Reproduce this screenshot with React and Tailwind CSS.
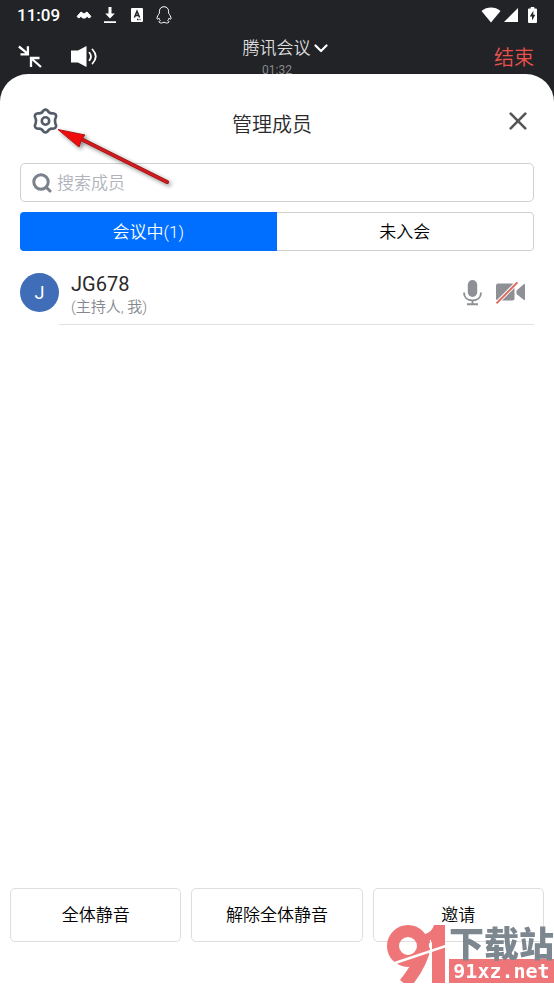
import { useState } from 'react';

const ACTIONS = ['全体静音', '解除全体静音', '邀请'];

const MEMBERS = [
  { id: 1, name: 'JG678', initial: 'J', role: '(主持人, 我)' },
];

function StatusBar() {
  return (
    <div className="flex h-[30px] items-center justify-between pl-[17px] pr-[17px]">
      <div className="flex items-center">
        <span className="w-[59px] text-[17px] font-medium leading-[30px]">11:09</span>
        <svg width="16" height="8" viewBox="0 0 16 8" fill="white" stroke="white" strokeWidth="1" strokeLinejoin="round">
          <path d="M1 5.500 5 1 8 3 11 1 15 5.500 13 7 11 5.200 9.500 7H6.500L5 5.200 3 7z" />
        </svg>
        <svg className="ml-[12px]" width="12" height="16" viewBox="0 0 12 16" fill="white">
          <path d="M4.500 0h3v6.500h3.300L6 11.500 1.200 6.500h3.300zM0 14.200h12V16H0z" />
        </svg>
        <svg className="ml-[15px]" width="12" height="14" viewBox="0 0 12 14">
          <rect width="12" height="14" rx="1" fill="white" />
          <path d="M3.400 9.500 6 3.300 8.600 9.500M4.400 7.500h3.200M6 11.500h1.500M8.500 11.500h1" fill="none" stroke="#222326" strokeWidth="1.500" />
        </svg>
        <svg className="ml-[13px]" width="16" height="18" viewBox="0 0 16 18" fill="none" stroke="white" strokeWidth="1" strokeLinejoin="round">
          <path d="M8 .7C5 .7 3.400 2.800 3.400 5.500v1.700C2.200 8.800 1 10.800 1 12.400c0 1.300 1 .9 1.900-.4.2 1 .7 1.900 1.400 2.600-1.100.5-1.500 1.100-1 1.800.7.900 3.600.7 4.700-.3 1.100 1 4 1.200 4.700.3.5-.7.100-1.300-1-1.800.7-.7 1.200-1.600 1.400-2.600.9 1.300 1.900 1.700 1.900.4 0-1.600-1.200-3.600-2.400-5.200V5.500C12.600 2.800 11 .7 8 .7z" />
        </svg>
      </div>
      <div className="flex items-center">
        <svg width="20" height="16" viewBox="0 0 20 16" fill="white">
          <path d="M.5 4C5.800-.6 14.200-.6 19.500 4L10 15.500z" />
        </svg>
        <svg className="ml-[3px]" width="14" height="14" viewBox="0 0 14 14" fill="white">
          <path d="M14 0v14H0z" />
        </svg>
        <svg className="ml-[10px]" width="9" height="16" viewBox="0 0 9 16">
          <path d="M2.700 0h3.600v1.500H8q1 0 1 1V15q0 1-1 1H1q-1 0-1-1V2.500q0-1 1-1h1.700z" fill="white" />
          <path d="M5.300 3.800 1.800 9.400H4v4L7.300 7.700H5.300z" fill="#222326" />
        </svg>
      </div>
    </div>
  );
}

function MeetingBar() {
  return (
    <div className="grid h-[44px] grid-cols-[1fr_auto_1fr]">
      <div className="flex items-start gap-[29px] pl-[18px] pt-[15px]">
        <button type="button" aria-label="最小化">
          <svg width="24" height="24" viewBox="0 0 24 24" fill="none" stroke="white" strokeWidth="2.300">
            <path d="M.9 1.500 9.600 8.700M9.900 1.300v8H2.500M23 22 13.500 13.500M13 22v-9h8.500" />
          </svg>
        </button>
        <button type="button" aria-label="扬声器">
          <svg width="26" height="24" viewBox="0 0 26 24" fill="none" stroke="white" strokeWidth="1.800" strokeLinecap="round">
            <path d="M0 5.500h7L15.500 1v21L7 17.500H0z" fill="white" stroke="none" />
            <path d="M18.500 7.800q3 3.700 0 7.400M21.500 4.500q6.500 7 0 14" />
          </svg>
        </button>
      </div>
      <div className="pl-4 pt-[6px]">
        <button type="button" className="flex items-center gap-[3px] text-[17px] font-[350] leading-6 text-[#dcdcde]">
          腾讯会议
          <svg width="14" height="9" viewBox="0 0 14 9" fill="none" stroke="white" strokeWidth="2.200" strokeLinecap="round" strokeLinejoin="round">
            <path d="M1.500 1.500 7 7l5.500-5.500" />
          </svg>
        </button>
        <div className="pr-[16px] text-center text-[12px] leading-[20px] text-[#88888b]">01:32</div>
      </div>
      <div className="flex items-start justify-end pr-5 pt-[16px]">
        <button type="button" className="text-[20px] font-[350] leading-6 text-[#ec514e]">结束</button>
      </div>
    </div>
  );
}

function SheetHeader() {
  return (
    <div className="grid grid-cols-[1fr_auto_1fr] items-start pl-[33px] pr-[27px] pt-[34px]">
      <button type="button" aria-label="设置" className="justify-self-start">
        <svg width="25" height="26" viewBox="0 0 25 26" fill="none" stroke="#545c69" strokeWidth="2.600" strokeLinejoin="round">
          <path d="M10.500 2.500Q12.500 .7 14.500 2.500Q16.500 6 20 5.300Q23 5.500 23.200 8.500Q20.800 13 23.200 17.500Q23 20.500 20 20.700Q16.500 20 14.500 23.500Q12.500 25.300 10.500 23.500Q8.500 20 5 20.700Q2 20.500 1.800 17.500Q4.200 13 1.800 8.500Q2 5.500 5 5.300Q8.500 6 10.500 2.500Z" />
          <circle cx="12.500" cy="13" r="3.700" />
        </svg>
      </button>
      <h1 className="pr-4 pt-[3px] text-[20px] font-[350] leading-7 text-[#2a2a2c]">管理成员</h1>
      <button type="button" aria-label="关闭" className="justify-self-end pt-[4px]">
        <svg width="18" height="18" viewBox="0 0 18 18" fill="none" stroke="#555558" strokeWidth="2.600" strokeLinecap="round">
          <path d="m1.700 1.700 14.600 14.600M16.300 1.700 1.700 16.300" />
        </svg>
      </button>
    </div>
  );
}

function MemberRow({ member }) {
  return (
    <li className="flex px-5">
      <div className="flex h-[39px] w-[39px] shrink-0 items-center justify-center rounded-full bg-[#3f6db8] text-[18px] text-white">
        {member.initial}
      </div>
      <div className="flex flex-1 items-start justify-between border-b border-[#e0e0e2] pb-[5px] pl-[12px] pr-[9px]">
        <div>
          <p className="text-[20px] leading-[22px] text-[#2a2a2c]">{member.name}</p>
          <p className="text-[15px] font-[350] leading-[24px] text-[#85878c]">{member.role}</p>
        </div>
        <div className="flex items-center gap-[14px] pt-[7px]">
          <button type="button" aria-label="静音">
            <svg width="19" height="26" viewBox="0 0 19 26" fill="none" stroke="#8e9096" strokeWidth="1.900">
              <rect x="4.800" y="0" width="9.400" height="17" rx="4.700" fill="#8e9096" stroke="none" />
              <path d="M1 12.500C1 17.500 4.500 20.500 9.500 20.500S18 17.500 18 12.500M9.500 20.500v3.800M4 24.300h11" />
            </svg>
          </button>
          <button type="button" aria-label="开启视频">
            <svg width="29" height="22" viewBox="0 0 29 22">
              <path d="M2 1.500h14.500q2 0 2 2v13q0 2-2 2H2q-2 0-2-2v-13q0-2 2-2z" fill="#8e9096" />
              <path d="M20.500 8.500 28 2q1-.5 1 1v14q0 1.500-1 1l-7.500-6z" fill="#8e9096" />
              <path d="M.8 21 21.200.5" stroke="white" strokeWidth="3.800" />
              <path d="M.5 21.300 21.500.3" stroke="#dc6b5e" strokeWidth="2" />
            </svg>
          </button>
        </div>
      </div>
    </li>
  );
}

function Arrow() {
  return (
    <svg className="pointer-events-none absolute left-[54px] top-[50px] drop-shadow-[2px_2px_2px_rgba(0,0,0,0.45)]" width="124" height="68" viewBox="0 0 124 68">
      <path d="M28 15.500 113 58" stroke="#9f1518" strokeWidth="4" strokeLinecap="round" />
      <path d="M28 15.500 113 58" stroke="#d81a1c" strokeWidth="2" strokeLinecap="round" />
      <path d="M4 5.500 31 11 27.500 15.500 25 23z" fill="#f00c0c" stroke="#b31315" strokeWidth="1" />
    </svg>
  );
}

function Watermark() {
  return (
    <div className="pointer-events-none absolute bottom-0 right-0 flex items-end gap-[3px] pb-px opacity-95">
      {/* ring with a tail and a slanted cut, beside an upright bar */}
      <svg width="62" height="58" viewBox="0 0 62 58">
        <g fill="none" stroke="#ee6f72">
          <circle cx="24" cy="21" r="15" strokeWidth="12" />
          <path d="M40 22Q38 38 21 59" strokeWidth="13" />
        </g>
        <path d="M41 9Q48 7 50 0H61V58H48V17L42 20z" fill="#ee6f72" />
        <path d="M8 39 62 21" stroke="white" strokeWidth="2.500" />
        <path d="M46.500 15V27" stroke="white" strokeWidth="1.200" />
      </svg>
      <div>
        <p className="font-['Noto_Sans_CJK_SC',sans-serif] text-[35px] font-black leading-[35px] text-[#77818b]">下载站</p>
        <p className="bg-[#ee6f72] text-center font-['DejaVu_Sans_Mono',monospace] text-[20px] font-bold leading-[24px] text-white">91xz.net</p>
      </div>
    </div>
  );
}

export default function App() {
  const [tab, setTab] = useState('in');
  const [query, setQuery] = useState('');

  const members = tab === 'in' ? MEMBERS.filter(m => m.name.includes(query)) : [];

  return (
    <div className="flex min-h-screen flex-col bg-[#222326] font-[Roboto,'Noto_Sans_CJK_SC',sans-serif] text-white">
      <StatusBar />
      <MeetingBar />

      <main className="relative flex flex-1 flex-col rounded-t-[28px] bg-white text-black">
        <SheetHeader />

        <label className="mx-5 mt-[24px] flex h-[39px] items-center gap-[5px] rounded-[5px] border border-[#d0d0d2] pl-[11px] pr-3">
          <svg width="20" height="20" viewBox="0 0 20 20" fill="none" stroke="#7b818c" strokeWidth="3" strokeLinecap="round">
            <circle cx="9" cy="9" r="7.200" />
            <path d="m14.500 14.500 3.500 3.500" />
          </svg>
          <input
            type="text"
            aria-label="搜索成员"
            placeholder="搜索成员"
            value={query}
            onChange={e => setQuery(e.target.value)}
            className="min-w-0 flex-1 pt-[2px] text-[17px] font-[350] outline-none placeholder:text-[#b0b3bb]"
          />
        </label>

        <div className="mx-5 mt-[10px] flex h-[39px] overflow-hidden rounded-[4px] text-[17px] font-[350]">
          <button type="button" onClick={() => setTab('in')}
            className={tab === 'in' ? 'flex-1 bg-[#006fff] pt-[2px] text-white' : 'flex-1 rounded-l-[4px] border border-r-0 border-[#d0d0d2] pt-[2px]'}>
            会议中(1)
          </button>
          <button type="button" onClick={() => setTab('out')}
            className={tab === 'out' ? 'flex-1 bg-[#006fff] pt-[2px] text-white' : 'flex-1 rounded-r-[4px] border border-l-0 border-[#d0d0d2] pt-[2px]'}>
            未入会
          </button>
        </div>

        <ul className="mt-[22px] flex-1">
          {members.map(m => <MemberRow key={m.id} member={m} />)}
        </ul>

        <div className="mb-[42px] grid grid-cols-3 gap-[10px] px-[10px]">
          {ACTIONS.map(label => (
            <button key={label} type="button" className="h-[54px] rounded-[5px] border border-[#dededf] pt-[2px] text-[17px] font-[350]">
              {label}
            </button>
          ))}
        </div>

        <Arrow />
        <Watermark />
      </main>
    </div>
  );
}
